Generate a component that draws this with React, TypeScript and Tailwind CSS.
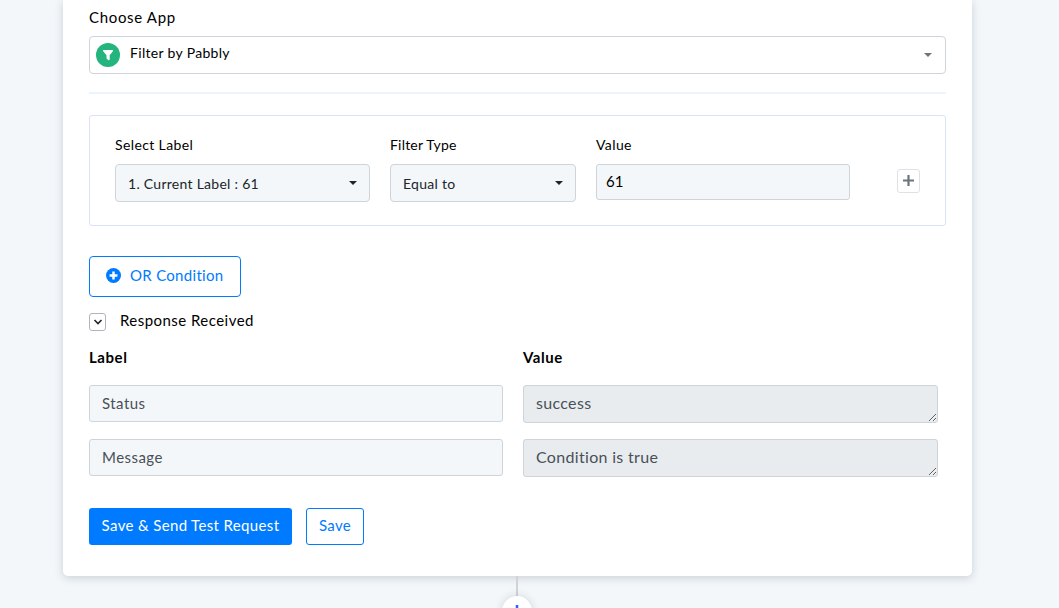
import { useState } from 'react'
import { clsx } from 'clsx'

type ResponseRow = {
  label: string
  value: string
}

const responseRows: ResponseRow[] = [
  { label: 'Status', value: 'success' },
  { label: 'Message', value: 'Condition is true' }
]

const Caret = ({ className }: { className?: string }) => (
  <svg
    viewBox="0 0 8 4"
    className={clsx('h-1 w-2 shrink-0 fill-current', className)}
  >
    <path d="M0 0h8L4 4z" />
  </svg>
)

const FilterLogo = () => (
  <svg viewBox="0 0 24 24" className="size-6 shrink-0">
    <circle cx="12" cy="12" r="12" fill="#24b47e" />
    <path
      d="M7.6 7h8.8q1.1.1.6 1.1l-3.3 4.2v4q0 1.1-1 1l-1.7-1.2q-.5-.4-.5-1v-2.8L7 8.1Q6.500 7.100 7.600 7z"
      fill="#fff"
    />
  </svg>
)

const PlusCircle = () => (
  <svg viewBox="0 0 16 16" className="-mt-0.5 size-[15px] shrink-0">
    <circle cx="8" cy="8" r="8" fill="#007bff" />
    <path d="M8 3.800v8.400M3.800 8h8.400" stroke="#fff" strokeWidth="2.600" />
  </svg>
)

const SelectBox = ({ text, className }: { text: string; className: string }) => (
  <button
    type="button"
    className={clsx(
      'flex h-[38px] items-center justify-between rounded border border-[#ced4da] bg-[#f3f7fa] px-3 text-left text-[14px] text-[#212529]',
      className
    )}
  >
    <span className="tracking-[0.27px]">{text}</span>
    <Caret />
  </button>
)

export default function App() {
  const [filterValue, setFilterValue] = useState('61')
  const [showResponse, setShowResponse] = useState(true)

  return (
    <div className="h-[608px] overflow-hidden bg-[#f3f7fa] font-['Lato',sans-serif] text-black [font-variant-ligatures:none]">
      <div className="ml-[63px] h-[576px] w-[909px] rounded-b-[5px] bg-white px-[26px] shadow-[0_2px_8px_rgba(60,75,90,0.22)]">
        <div className="flex h-9 items-center pb-0.5 text-[15px]">
          <span className="tracking-[0.67px]">Choose App</span>
        </div>

        <div className="flex h-[38px] items-center rounded border border-[#ced4da] pr-[13px] pl-1.5">
          <FilterLogo />
          <span className="-mt-1.5 ml-2.5 text-[14px] tracking-[0.32px]">
            Filter by Pabbly
          </span>
          <Caret className="ml-auto text-[#6c757d]" />
        </div>

        <div className="mt-[18px] h-0.5 bg-[#ecf4fd]" />

        {/* Filter condition */}
        <div className="mt-[21px] flex h-[111px] rounded-[3px] border border-[#d9e2f8] pt-[18px] pl-[25px] text-[14px]">
          <div className="w-[255px]">
            <div className="mb-2.5 h-5 leading-[22px] tracking-[0.38px]">Select Label</div>
            <SelectBox text="1. Current Label : 61" className="w-[255px]" />
          </div>
          <div className="ml-5 w-[186px]">
            <div className="mb-2.5 h-5 leading-[22px] tracking-[0.2px]">Filter Type</div>
            <SelectBox text="Equal to" className="w-[186px]" />
          </div>
          <div className="ml-5 w-[254px]">
            <div className="mb-2.5 h-5 leading-[22px] tracking-[0.4px]">Value</div>
            <input
              value={filterValue}
              onChange={e => setFilterValue(e.target.value)}
              className="block h-9 w-full rounded-[3px] border border-[#ced4da] bg-[#f3f7fa] px-[9px] pb-0.5 text-[15px] outline-none"
            />
          </div>
          <button
            type="button"
            className="mt-[35px] ml-[47px] flex h-6 w-[23px] items-center justify-center rounded-[3px] border border-[#dee2e6]"
          >
            <svg viewBox="0 0 11 11" className="-mt-px size-[11px]">
              <path d="M5.500 0v11M0 5.500h11" stroke="#6c757d" strokeWidth="2.200" />
            </svg>
          </button>
        </div>

        <button
          type="button"
          className="mt-[30px] flex h-[41px] w-[152px] items-center rounded border border-[#007bff] pl-4 text-[15px] text-[#007bff]"
        >
          <PlusCircle />
          <span className="-mt-[3px] ml-[9px] tracking-[0.3px]">OR Condition</span>
        </button>

        <div className="mt-4 flex h-[18px] items-center">
          <button
            type="button"
            onClick={() => setShowResponse(prev => !prev)}
            className="flex h-[18px] w-[17px] items-center justify-center rounded-[3px] border border-[#adb5bd]"
          >
            <svg viewBox="0 0 10 6" className="h-1.5 w-2.5">
              <path d="M1.500 1L5 4.500 8.500 1" fill="none" stroke="#212529" strokeWidth="1.600" />
            </svg>
          </button>
          <span className="-mt-1 ml-3.5 text-[15px] tracking-[0.46px]">Response Received</span>
        </div>

        {/* Response table */}
        <div className={clsx('h-[177px]', !showResponse && 'invisible')}>
          <div className="flex h-[54px] items-center pb-0.5 text-[15px] font-bold tracking-[0.55px]">
            <span className="w-[434px]">Label</span>
            <span>Value</span>
          </div>
          {responseRows.map(row => (
            <div key={row.label} className="flex h-[54px] gap-5">
              <input
                readOnly
                value={row.label}
                className="block h-[37px] w-[414px] rounded-[3px] border border-[#ced4da] bg-[#f3f7fa] px-3 pb-0.5 text-[15px] tracking-[0.45px] text-[#495057] outline-none"
              />
              <textarea
                readOnly
                value={row.value}
                className="block h-[38px] w-[415px] resize overflow-hidden rounded-[3px] border border-[#ced4da] bg-[#e8ecef] px-3 py-[5px] text-[16px] leading-6 tracking-[0.32px] text-[#495057] outline-none"
              />
            </div>
          ))}
        </div>

        <div className="flex gap-3.5 text-[15px] tracking-[0.35px]">
          <button
            type="button"
            className="h-[37px] w-[203px] rounded-[3px] bg-[#007bff] pb-0.5 text-white"
          >
            Save &amp; Send Test Request
          </button>
          <button
            type="button"
            className="h-[37px] w-[58px] rounded-[3px] border border-[#007bff] pb-0.5 text-[#007bff]"
          >
            Save
          </button>
        </div>
      </div>

      {/* Connector to the next step */}
      <div className="ml-[502px] flex w-[30px] flex-col items-center">
        <div className="h-5 w-0.5 bg-[#ced4da]" />
        <div className="flex size-[30px] shrink-0 justify-center rounded-full bg-white pt-[9px] shadow-[0_0_8px_rgba(60,75,90,0.2)]">
          <svg viewBox="0 0 12 12" className="size-3">
            <path d="M6 0v12M0 6h12" stroke="#2962ff" strokeWidth="2.500" />
          </svg>
        </div>
      </div>
    </div>
  )
}
